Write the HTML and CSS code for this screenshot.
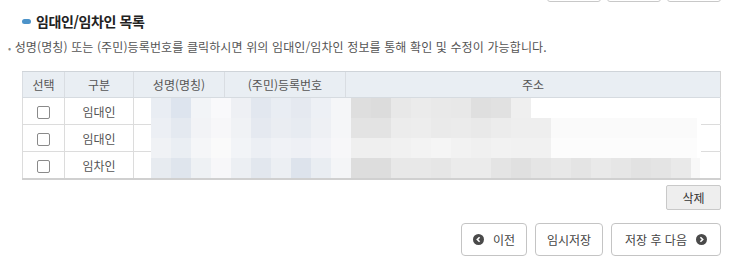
FILE: index.html
```html
<!DOCTYPE html>
<html lang="ko">
<head>
    <meta charset="UTF-8">
    <title>임대인/임차인 목록</title>
    <link rel="stylesheet" href="styles.css">
</head>
<body>
    <div class="page">
        <div class="top-btns">
            <span class="tbtn"></span>
            <span class="tbtn"></span>
            <span class="tbtn"></span>
        </div>

        <h2 class="sect-title"><span class="title-icon"></span>임대인/임차인 목록</h2>
        <p class="note"><span class="dot">•</span> 성명(명칭) 또는 (주민)등록번호를 클릭하시면 위의 임대인/임차인 정보를 통해 확인 및 수정이 가능합니다.</p>

        <div class="list-wrap">
            <table class="list">
                <thead>
                    <tr>
                        <th class="c-sel">선택</th>
                        <th class="c-type">구분</th>
                        <th class="c-name">성명(명칭)</th>
                        <th class="c-reg">(주민)등록번호</th>
                        <th>주소</th>
                    </tr>
                </thead>
                <tbody>
                    <tr>
                        <td><span class="chk"></span></td>
                        <td>임대인</td>
                        <td></td>
                        <td></td>
                        <td></td>
                    </tr>
                    <tr>
                        <td><span class="chk"></span></td>
                        <td>임대인</td>
                        <td></td>
                        <td></td>
                        <td></td>
                    </tr>
                    <tr>
                        <td><span class="chk"></span></td>
                        <td>임차인</td>
                        <td></td>
                        <td></td>
                        <td></td>
                    </tr>
                </tbody>
            </table>
            <!-- 개인정보 모자이크 -->
            <div class="mosaic">
                <div class="mz mz1"></div>
                <div class="mz mz2"></div>
                <div class="mz mz3"></div>
                <div class="mz mz4"></div>
            </div>
        </div>

        <div class="row-btns">
            <button class="btn-gray">삭제</button>
        </div>

        <div class="nav-btns">
            <button class="btn-nav btn-prev">
                <svg class="ico" width="11" height="11" viewBox="0 0 11 11"><circle cx="5.5" cy="5.5" r="5.5" fill="#4a4a4a"/><path d="M6.6 3.2 4.3 5.5 6.6 7.8" stroke="#fff" stroke-width="1.6" fill="none"/></svg>
                이전
            </button>
            <button class="btn-nav btn-temp">임시저장</button>
            <button class="btn-nav btn-next">
                저장 후 다음
                <svg class="ico" width="11" height="11" viewBox="0 0 11 11"><circle cx="5.5" cy="5.5" r="5.5" fill="#4a4a4a"/><path d="M4.4 3.2 6.7 5.5 4.4 7.8" stroke="#fff" stroke-width="1.6" fill="none"/></svg>
            </button>
        </div>
    </div>
</body>
</html>
```

FILE: styles.css
```css
body {
    margin: 0;
    padding: 0;
    background-color: #fff;
    font-family: "Noto Sans CJK KR", "Noto Sans", sans-serif;
    color: #555;
}
.page {
    width: 713px;
    padding: 0 22px 0 8px;
}
.top-btns {
    display: flex;
    justify-content: flex-end;
    gap: 6px;
    margin-top: -20px;
    height: 22px;
}
.tbtn {
    box-sizing: border-box;
    width: 54px;
    height: 22px;
    border: 1px solid #c8c8c8;
    border-radius: 3px;
    background-color: #fff;
}
.sect-title {
    display: flex;
    align-items: center;
    margin: 0 0 0 14px;
    padding-top: 7px;
    height: 24px;
    font-size: 14px;
    font-weight: bold;
    color: #222;
    letter-spacing: -0.4px;
}
.title-icon {
    display: inline-block;
    width: 9px;
    height: 5px;
    border-radius: 3px;
    background-color: #4c93c9;
    margin-right: 5px;
}
.note {
    margin: 6px 0 0 0;
    font-size: 12px;
    line-height: 16px;
    color: #555;
    letter-spacing: 0.12px;
}
.note .dot {
    color: #888;
    font-size: 9px;
}
.list-wrap {
    position: relative;
    margin: 14px 0 0 14px;
    width: 699px;
}
.list {
    width: 100%;
    border-collapse: collapse;
    table-layout: fixed;
    font-size: 12px;
    color: #555;
}
.list th {
    height: 25px;
    padding: 0;
    font-weight: normal;
    background-color: #e9eef3;
    border-top: 1px solid #cfd4d9;
    border-left: 1px solid #d9dde2;
    border-bottom: 1px solid #d6dbe0;
    text-align: center;
}
.list td {
    height: 26px;
    padding: 0;
    border-left: 1px solid #dcdcdc;
    border-bottom: 1px solid #dcdcdc;
    text-align: center;
}
.list th:last-child,
.list td:last-child {
    border-right: 1px solid #d4d4d4;
}
.list tbody tr:last-child td {
    border-bottom: 2px solid #d0d0d0;
}
.c-sel { width: 41px; }
.c-type { width: 68px; }
.c-name { width: 90px; }
.c-reg { width: 120px; }
.chk {
    display: inline-block;
    width: 11px;
    height: 11px;
    border: 1px solid #8a8a8a;
    border-radius: 2px;
    vertical-align: middle;
    margin-top: -2px;
}
.mosaic {
    position: absolute;
    top: 27px;
    left: 129px;
    width: 550px;
}
.mz {
    height: 20px;
}
.mz1 {
    background: linear-gradient(to right,
        #e9edf3 0 20px, #dde4ee 20px 40px, #f2f4f7 40px 60px, #f9f9fb 60px 80px,
        #eef0f4 80px 100px, #e2e7ef 100px 120px, #e9edf3 120px 140px, #e5e9f0 140px 160px,
        #edf0f5 160px 180px, #f5f6f8 180px 200px,
        #dedede 200px 220px, #dcdcdc 220px 240px, #e8e8e8 240px 260px, #ebebeb 260px 280px,
        #e9e9e9 280px 300px, #e8e8e8 300px 320px, #dfdfdf 320px 340px, #e1e1e1 340px 360px,
        #efefef 360px 380px, #fff 380px);
}
.mz2 {
    background: linear-gradient(to right,
        #eceff4 0 20px, #e4e9f0 20px 40px, #f2f3f6 40px 60px, #f7f7f9 60px 80px,
        #f0f2f5 80px 100px, #e5e9f0 100px 120px, #eaedf2 120px 140px, #e7ebf1 140px 160px,
        #eef0f4 160px 180px, #f5f6f8 180px 200px,
        #e3e3e3 200px 240px, #ececec 240px 260px, #ededed 260px 280px, #eaeaea 280px 300px,
        #ebebeb 300px 320px, #e9e9e9 320px 340px, #ececec 340px 360px, #eeeeee 360px 400px,
        #fafafa 400px 546px, #fff 546px);
}
.mz3 {
    background: linear-gradient(to right,
        #f0f2f5 0 20px, #eaeef3 20px 40px, #f5f6f8 40px 60px, #fafafa 60px 80px,
        #f2f4f7 80px 100px, #eceff4 100px 120px, #f0f2f6 120px 140px, #eef0f5 140px 160px,
        #f2f3f7 160px 180px, #f7f7f9 180px 200px,
        #efefef 200px 240px, #f1f1f1 240px 260px, #f3f3f3 260px 280px, #f5f5f5 280px 300px,
        #f2f2f2 300px 320px, #f0f0f0 320px 340px, #f2f2f2 340px 360px, #f1f1f1 360px 400px,
        #fcfcfc 400px 546px, #fff 546px);
}
.mz4 {
    background: linear-gradient(to right,
        #e7ebf0 0 20px, #dfe5ed 20px 40px, #eef1f4 40px 60px, #f7f7f9 60px 80px,
        #eceff3 80px 100px, #e2e7ee 100px 120px, #eceff3 120px 140px, #dde3ec 140px 160px,
        #e9edf2 160px 180px, #f4f5f7 180px 200px,
        #dddddd 200px 240px, #e8e8e8 240px 280px, #e6e6e6 280px 300px, #ebebeb 300px 340px,
        #e4e4e4 340px 360px, #e0e0e0 360px 380px, #e5e5e5 380px 400px, #e8e8e8 400px 420px,
        #e4e4e4 420px 440px, #e9e9e9 440px 460px, #e6e6e6 460px 480px, #e2e2e2 480px 500px,
        #e4e4e4 500px 520px, #e9e9e9 520px 540px, #f8f8f8 540px 549px, #fff 549px);
}
.row-btns {
    display: flex;
    justify-content: flex-end;
    margin-top: 5px;
}
.btn-gray {
    width: 55px;
    height: 25px;
    padding: 0;
    font-family: inherit;
    font-size: 12px;
    color: #333;
    background-color: #eeeeee;
    border: 1px solid #c9c9c9;
    border-radius: 2px;
}
.nav-btns {
    display: flex;
    justify-content: flex-end;
    gap: 8px;
    margin-top: 13px;
}
.btn-nav {
    display: flex;
    align-items: center;
    justify-content: center;
    gap: 9px;
    height: 33px;
    padding: 0;
    white-space: nowrap;
    font-family: inherit;
    font-size: 12px;
    color: #444;
    background-color: #fff;
    border: 1px solid #c4c4c4;
    border-radius: 4px;
}
.btn-prev {
    width: 66px;
}
.btn-temp {
    width: 68px;
}
.btn-next {
    width: 110px;
}
```
